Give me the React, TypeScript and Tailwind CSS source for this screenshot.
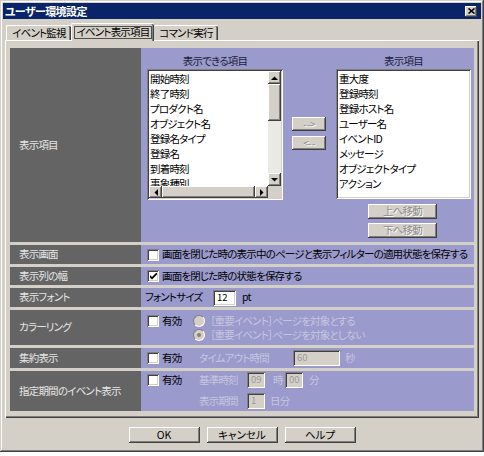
import React from "react";

const raised =
  "bg-[#d4d0c8] shadow-[inset_-1px_-1px_0_#404040,inset_1px_1px_0_#ffffff,inset_-2px_-2px_0_#808080,inset_2px_2px_0_#d4d0c8]";
const sunken =
  "shadow-[inset_1px_1px_0_#808080,inset_-1px_-1px_0_#ffffff,inset_2px_2px_0_#404040,inset_-2px_-2px_0_#d4d0c8]";
const dimText = "text-[#c6c6e0]";
const btnDim = "text-[#8c8c8c] [text-shadow:1px_1px_0_#ffffff]";

function Arrow({ dir }: { dir: "up" | "down" | "left" | "right" }) {
  const pts = {
    up: "0,4 7,4 3.5,0.5",
    down: "0,0 7,0 3.5,3.5",
    left: "4,0 4,7 0.5,3.5",
    right: "0,0 0,7 3.5,3.5",
  }[dir];
  const vertical = dir === "up" || dir === "down";
  return (
    <div className={`${vertical ? "w-[13px] h-[13px]" : "w-[13px] h-[12px]"} shrink-0 flex items-center justify-center ${raised}`}>
      <svg width={vertical ? 7 : 4} height={vertical ? 4 : 7}>
        <polygon points={pts} fill="#000" />
      </svg>
    </div>
  );
}

function Check({ checked }: { checked?: boolean }) {
  return (
    <span className={`w-[12px] h-[12px] shrink-0 bg-white flex items-center justify-center ${sunken}`}>
      {checked && (
        <svg width="7" height="7" viewBox="0 0 7 7">
          <polygon points="0,2 2,4 7,-1 7,1.5 2,6.5 0,4.5" fill="#000" />
        </svg>
      )}
    </span>
  );
}

function Radio({ selected }: { selected?: boolean }) {
  return (
    <span className="w-[12px] h-[12px] shrink-0 rounded-full bg-[#d4d0c8] border border-t-[#808080] border-l-[#808080] border-b-white border-r-white flex items-center justify-center">
      {selected && <span className="w-[4px] h-[4px] rounded-full bg-[#808080]" />}
    </span>
  );
}

function Field({ value, w, light }: { value: string; w: string; light?: boolean }) {
  return (
    <span
      className={`${w} h-[16px] shrink-0 flex items-center pl-[4px] text-[9.5px] tracking-normal ${sunken} ${
        light ? "bg-white text-black" : "bg-[#d4d0c8] text-[#9a9a9a]"
      }`}
    >
      {value}
    </span>
  );
}

const leftItems = ["開始時刻", "終了時刻", "プロダクト名", "オブジェクト名", "登録名タイプ", "登録名", "到着時刻", "事象種別"];
const rightItems = ["重大度", "登録時刻", "登録ホスト名", "ユーザー名", "イベントID", "メッセージ", "オブジェクトタイプ", "アクション"];

export default function App() {
  const label = "bg-[#646464] text-[#e6e6e6] pl-[9px] flex items-center";
  const cell = "bg-[#9a9acc] text-black";

  return (
    <div className="w-[484px] h-[456px] bg-white font-['Noto_Sans_CJK_JP',sans-serif] [font-feature-settings:'palt'] text-[10.5px] tracking-[-0.8px] leading-none whitespace-nowrap">
      <div className="w-[484px] h-[452px] bg-[#d4d0c8] p-[3px] flex flex-col shadow-[inset_-1px_-1px_0_#404040,inset_1px_1px_0_#d4d0c8,inset_-2px_-2px_0_#808080,inset_2px_2px_0_#ffffff]">
        {/* title bar */}
        <div className="h-[16px] bg-[#0a246a] flex items-center justify-between pl-[2px] pr-[4px]">
          <span className="text-white font-bold text-[11px] tracking-[-0.6px]">ユーザー環境設定</span>
          <span className={`w-[12px] h-[11px] flex items-center justify-center ${raised}`}>
            <svg width="7" height="6" viewBox="0 0 7 6">
              <path d="M0.5 0.5 L6.5 5.5 M6.5 0.5 L0.5 5.5" stroke="#000" strokeWidth="1.6" />
            </svg>
          </span>
        </div>

        {/* tabs */}
        <div className="mt-[3px] ml-[3px] h-[18px] flex items-end relative z-10">
          <div className="w-[65px] h-[15px] rounded-t-[2px] border-t border-l border-white shadow-[inset_-1px_0_0_#404040,inset_-2px_0_0_#808080] flex items-center justify-center">
            イベント監視
          </div>
          <div className="w-[83px] h-[18px] -mb-[1px] bg-[#d4d0c8] rounded-t-[2px] border-t border-l border-white shadow-[inset_-1px_0_0_#404040,inset_-2px_0_0_#808080] flex items-start justify-center pt-[2px]">
            <span className="border border-[#505050] px-[2px] h-[13px] flex items-center">イベント表示項目</span>
          </div>
          <div className="w-[64px] h-[15px] rounded-t-[2px] border-t border-white shadow-[inset_-1px_0_0_#404040,inset_-2px_0_0_#808080] flex items-center justify-center">
            コマンド実行
          </div>
        </div>

        {/* panel */}
        <div className="mx-[2px] h-[378px] pt-[8px] pl-[5px] border-t border-l border-white shadow-[inset_-1px_-1px_0_#404040,inset_-2px_-2px_0_#808080]">
          <div className="grid grid-cols-[131px_333px] grid-rows-[194px_19px_18px_19px_35px_20px_40px] gap-y-[3px] ml-[-1px] mt-[-1px]">
            {/* 表示項目 */}
            <div className={label}>表示項目</div>
            <div className={`${cell} pl-[6px] pt-[6px] flex`}>
              <div className="w-[136px] flex flex-col">
                <div className="h-[15px] flex items-center justify-center text-[#1c1c3c]">表示できる項目</div>
                <div className={`w-[136px] h-[131px] bg-white p-[2px] flex flex-col ${sunken}`}>
                  <div className="flex h-[115px]">
                    <div className="w-[119px] overflow-hidden pl-[1px] leading-[15px]">
                      {leftItems.map((t) => (
                        <div key={t}>{t}</div>
                      ))}
                    </div>
                    <div className="w-[13px] flex flex-col">
                      <Arrow dir="up" />
                      <div className={`h-[37px] ${raised}`} />
                      <div className="flex-1 bg-[#ebe9e4]" />
                      <Arrow dir="down" />
                    </div>
                  </div>
                  <div className="flex h-[12px]">
                    <Arrow dir="left" />
                    <div className={`flex-1 ${raised}`} />
                    <Arrow dir="right" />
                    <div className="w-[13px] bg-[#d4d0c8]" />
                  </div>
                </div>
              </div>
              <div className="w-[34px] ml-[9px] pt-[63px] flex flex-col gap-[5px]">
                <div className={`h-[14px] flex items-center justify-center text-[10px] ${raised} ${btnDim}`}>- -&gt;</div>
                <div className={`h-[14px] flex items-center justify-center text-[10px] ${raised} ${btnDim}`}>&lt;- -</div>
              </div>
              <div className="w-[135px] ml-[10px] flex flex-col">
                <div className="h-[15px] flex items-center justify-center text-[#1c1c3c]">表示項目</div>
                <div className={`w-[135px] h-[130px] bg-white p-[2px] pl-[3px] overflow-hidden leading-[15px] ${sunken}`}>
                  {rightItems.map((t) => (
                    <div key={t}>{t}</div>
                  ))}
                </div>
                <div className="ml-[32px] mt-[5px] flex flex-col gap-[4px]">
                  <div className={`w-[69px] h-[15px] flex items-center justify-center ${raised} ${btnDim}`}>上へ移動</div>
                  <div className={`w-[69px] h-[15px] flex items-center justify-center ${raised} ${btnDim}`}>下へ移動</div>
                </div>
              </div>
            </div>

            {/* 表示画面 */}
            <div className={label}>表示画面</div>
            <div className={`${cell} pl-[6px] flex items-center`}>
              <Check />
              <span className="ml-[3px]">画面を閉じた時の表示中のページと表示フィルターの適用状態を保存する</span>
            </div>

            {/* 表示列の幅 */}
            <div className={label}>表示列の幅</div>
            <div className={`${cell} pl-[6px] flex items-center`}>
              <Check checked />
              <span className="ml-[3px]">画面を閉じた時の状態を保存する</span>
            </div>

            {/* 表示フォント */}
            <div className={label}>表示フォント</div>
            <div className={`${cell} pl-[4px] flex items-center`}>
              <span className="w-[68px]">フォントサイズ</span>
              <Field value="12" w="w-[23px]" light />
              <span className="ml-[6px]">pt</span>
            </div>

            {/* カラーリング */}
            <div className={label}>カラーリング</div>
            <div className={`${cell} pl-[6px] pt-[4px] flex items-start`}>
              <div className="h-[14px] flex items-center">
                <Check />
                <span className="ml-[3px] w-[25px]">有効</span>
              </div>
              <div className="ml-[6px] flex flex-col">
                <div className="h-[14px] flex items-center">
                  <Radio />
                  <span className={`ml-[5px] ${dimText}`}>［重要イベント］ページを対象とする</span>
                </div>
                <div className="h-[14px] flex items-center">
                  <Radio selected />
                  <span className={`ml-[5px] ${dimText}`}>［重要イベント］ページを対象としない</span>
                </div>
              </div>
            </div>

            {/* 集約表示 */}
            <div className={label}>集約表示</div>
            <div className={`${cell} pl-[6px] flex items-center`}>
              <Check />
              <span className="ml-[3px] w-[37px]">有効</span>
              <span className={`w-[94px] ${dimText}`}>タイムアウト時間</span>
              <Field value="60" w="w-[47px]" />
              <span className={`ml-[5px] ${dimText}`}>秒</span>
            </div>

            {/* 指定期間のイベント表示 */}
            <div className={label}>指定期間のイベント表示</div>
            <div className={`${cell} pl-[6px] pt-[1px] flex items-start`}>
              <div className="h-[16px] flex items-center">
                <Check />
                <span className="ml-[3px] w-[37px]">有効</span>
              </div>
              <div className="flex flex-col gap-[5px]">
                <div className="h-[16px] flex items-center">
                  <span className={`w-[48px] ${dimText}`}>基準時刻</span>
                  <Field value="09" w="w-[18px]" />
                  <span className={`w-[20px] pl-[8px] ${dimText}`}>時</span>
                  <Field value="00" w="w-[18px]" />
                  <span className={`ml-[6px] ${dimText}`}>分</span>
                </div>
                <div className="h-[16px] flex items-center">
                  <span className={`w-[48px] ${dimText}`}>表示期間</span>
                  <Field value="1" w="w-[18px]" />
                  <span className={`ml-[5px] ${dimText}`}>日分</span>
                </div>
              </div>
            </div>
          </div>
        </div>

        {/* buttons */}
        <div className="mt-[9px] flex justify-center gap-[7px]">
          {["OK", "キャンセル", "ヘルプ"].map((t) => (
            <div key={t} className={`w-[71px] h-[16px] flex items-center justify-center tracking-normal ${raised}`}>
              {t}
            </div>
          ))}
        </div>
      </div>
    </div>
  );
}
